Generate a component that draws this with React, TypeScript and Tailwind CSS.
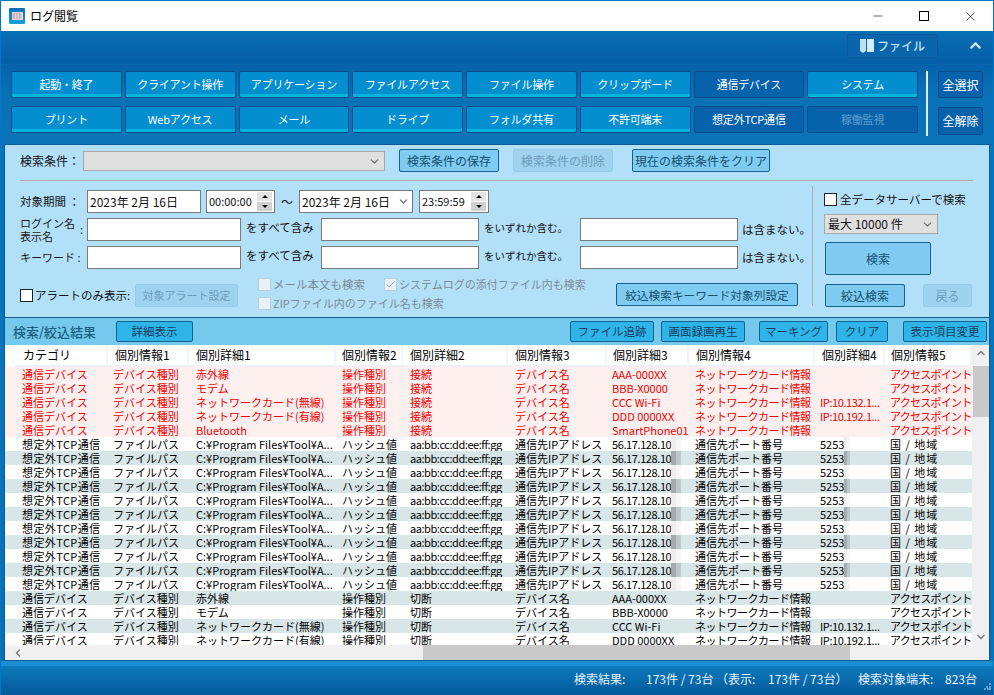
import type { ReactNode } from 'react'
import { Minus, X, ChevronUp, ChevronDown, ChevronLeft, Check } from 'lucide-react'

const row1 = ['起動・終了', 'クライアント操作', 'アプリケーション', 'ファイルアクセス', 'ファイル操作', 'クリップボード', '通信デバイス', 'システム']
const row2 = ['プリント', 'Webアクセス', 'メール', 'ドライブ', 'フォルダ共有', '不許可端末', '想定外TCP通信', '稼働監視']

const columns = [
  { name: 'カテゴリ', w: 'w-[93px]', pad: 'pl-[8px]', text: 'pl-[7px]' },
  { name: '個別情報1', w: 'w-[81px]', pad: 'pl-[7px]', text: 'pl-[5px]' },
  { name: '個別詳細1', w: 'w-[147px]', pad: 'pl-[7px]', text: 'pl-[7px]' },
  { name: '個別情報2', w: 'w-[67px]', pad: 'pl-[6px]', text: 'pl-[6px]' },
  { name: '個別詳細2', w: 'w-[105px]', pad: 'pl-[7px]', text: 'pl-[7px]' },
  { name: '個別情報3', w: 'w-[99px]', pad: 'pl-[7px]', text: 'pl-[7px]' },
  { name: '個別詳細3', w: 'w-[82px]', pad: 'pl-[6px]', text: 'pl-[5px]' },
  { name: '個別情報4', w: 'w-[126px]', pad: 'pl-[7px]', text: 'pl-[6px]' },
  { name: '個別詳細4', w: 'w-[70px]', pad: 'pl-[7px]', text: 'pl-[5px]' },
  { name: '個別情報5', w: 'w-[87px]', pad: 'pl-[6px]', text: 'pl-[5px]' },
]

const devices = [
  ['赤外線', 'AAA-000XX', ''],
  ['モデム', 'BBB-X0000', ''],
  ['ネットワークカード(無線)', 'CCC Wi-Fi', 'IP:10.132.1...'],
  ['ネットワークカード(有線)', 'DDD 0000XX', 'IP:10.192.1...'],
  ['Bluetooth', 'SmartPhone01', ''],
]

function deviceRow(d: string[], op: string) {
  return ['通信デバイス', 'デバイス種別', d[0], '操作種別', op, 'デバイス名', d[1], 'ネットワークカード情報', d[2], 'アクセスポイント']
}

const tcpRow = ['想定外TCP通信', 'ファイルパス', 'C:¥Program Files¥Tool¥A...', 'ハッシュ値', 'aa:bb:cc:dd:ee:ff:gg', '通信先IPアドレス', '56.17.128.10', '通信先ポート番号', '5253', '国 / 地域']

const rows = [
  ...devices.map((d) => ({ cells: deviceRow(d, '接続'), kind: 'alert' })),
  ...Array.from({ length: 11 }, () => ({ cells: tcpRow, kind: 'tcp' })),
  ...devices.slice(0, 4).map((d) => ({ cells: deviceRow(d, '切断'), kind: 'normal' })),
]

function cellTracking(kind: string, j: number) {
  if (kind === 'tcp') {
    if (j === 0) return 'tracking-[0.4px]'
    if (j === 4) return 'tracking-[-0.45px]'
    if (j === 6) return 'tracking-[-0.4px]'
    if (j === 9) return 'tracking-[1px]'
    return ''
  }
  if (j === 7) return 'tracking-[-0.5px]'
  if (j === 8) return 'tracking-[-0.4px]'
  if (j === 9) return 'tracking-[-0.75px]'
  return ''
}

function TopButton({ label, dark, disabled }: { label: string; dark?: boolean; disabled?: boolean }) {
  return (
    <div
      className={`h-[27px] rounded-[2px] border border-[#0b4e90] flex items-center justify-center text-[11px] tracking-[-0.2px] ${
        disabled
          ? 'bg-[#0762ac] text-[#5c9ccb]'
          : dark
            ? 'bg-[#0762ac] text-white'
            : 'bg-[#038fcf] text-white shadow-[inset_0_-3px_0_#02b4de]'
      }`}
    >
      {label}
    </div>
  )
}

function Btn({ label, className = '', disabled }: { label: string; className?: string; disabled?: boolean }) {
  return (
    <div
      className={`shrink-0 h-[23px] rounded-[2px] border flex items-center justify-center ${
        disabled ? 'bg-[#9fd2ec] border-[#97cbe6] text-[#6c9db8]' : 'bg-[#7fcbf2] border-[#12618f] text-[#14506e]'
      } ${className}`}
    >
      {label}
    </div>
  )
}

function HeadBtn({ label, className = '' }: { label: string; className?: string }) {
  return (
    <div className={`shrink-0 h-[21px] rounded-[2px] border border-[#12618f] bg-[#2fb4e9] flex items-center justify-center text-[11.5px] text-[#14405e] ${className}`}>
      {label}
    </div>
  )
}

function Field({ className = '' }: { className?: string }) {
  return <div className={`shrink-0 h-[23px] bg-white border border-[#7a7a7a] ${className}`} />
}

function Spinner() {
  return (
    <div className="flex flex-col gap-[1px] w-[15px] shrink-0">
      <div className="h-[9px] bg-[#e4e4e4] flex items-center justify-center">
        <div className="w-0 h-0 border-x-[3px] border-x-transparent border-b-[3px] border-b-black" />
      </div>
      <div className="h-[9px] bg-[#d0d0d0] flex items-center justify-center">
        <div className="w-0 h-0 border-x-[3px] border-x-transparent border-t-[3px] border-t-black" />
      </div>
    </div>
  )
}

function Box({ checked, disabled }: { checked?: boolean; disabled?: boolean }) {
  return (
    <div className={`shrink-0 w-[13px] h-[13px] flex items-center justify-center border ${disabled ? 'bg-[#e6f2f8] border-[#b9cfdb]' : 'bg-white border-[#222]'}`}>
      {checked && <Check size={11} strokeWidth={2} className="text-[#9a9a9a]" />}
    </div>
  )
}

function KeywordRow({ label }: { label: ReactNode }) {
  return (
    <div className="flex items-center h-[23px]">
      <div className="w-[67px] shrink-0 text-[11px] leading-[13px] text-[#1a1a1a]">{label}</div>
      <Field className="w-[154px]" />
      <span className="w-[80px] shrink-0 pl-[5px] text-[11.5px] pb-[4px] whitespace-nowrap">をすべて含み</span>
      <Field className="w-[158px]" />
      <span className="w-[101px] shrink-0 pl-[5px] text-[10.5px] pb-[4px] whitespace-nowrap">をいずれか含む。</span>
      <Field className="w-[158px]" />
      <span className="pl-[4px] text-[11.5px] whitespace-nowrap">は含まない。</span>
    </div>
  )
}

function Blur({ strong, narrow }: { strong: boolean; narrow?: boolean }) {
  return (
    <span className={`shrink-0 h-[14px] flex ${narrow ? 'w-[6px]' : 'w-[10px]'}`}>
      <span className={`flex-1 ${strong ? 'bg-[#a3adad]' : 'bg-[#eeeeee]'}`} />
      <span className={`flex-1 ${strong ? 'bg-[#bcc8c8]' : 'bg-[#f6f6f6]'}`} />
    </span>
  )
}

export default function App() {
  return (
    <div
      className="w-[994px] h-[695px] overflow-hidden flex flex-col border-x border-t border-[#0078c8] bg-[#0a6cb2] text-[#111]"
      style={{ fontFamily: '"Noto Sans CJK JP", "Liberation Sans", sans-serif' }}
    >
      {/* title bar */}
      <div className="h-[30px] shrink-0 bg-white flex items-center pl-[8px]">
        <div className="w-[16px] h-[16px] rounded-[1px] bg-[linear-gradient(180deg,#0a6fb8,#12a4d8)] flex items-center justify-center">
          <div className="w-[11px] h-[8px] bg-[#e6d3da] grid grid-cols-3 gap-[1px] p-[1px]">
            <div className="bg-[#e8a9a4]" />
            <div className="bg-[#b9c6de]" />
            <div className="bg-[#e8a9a4]" />
          </div>
        </div>
        <span className="ml-[5px] text-[12px] text-black">ログ閲覧</span>
        <div className="ml-auto flex items-center text-black">
          <div className="w-[46px] flex justify-center"><Minus size={14} strokeWidth={1} /></div>
          <div className="w-[46px] flex justify-center"><div className="w-[10px] h-[10px] border border-black" /></div>
          <div className="w-[46px] flex justify-center"><X size={15} strokeWidth={1} /></div>
        </div>
      </div>

      {/* ribbon */}
      <div className="flex-1 min-h-0 flex flex-col bg-[linear-gradient(180deg,#086eb3_0px,#055fa8_30px,#0a70b5_60px,#0b74b8_110px,#0a70b5_630px,#0c7cbd_634px,#04599b_664px)]">
        <div className="h-[34px] shrink-0 flex items-center justify-end border-b border-[#0a66ac] pb-[4px] mb-[6px]">
          <div className="w-[91px] h-[24px] rounded-[2px] border border-[#0d5a9e] bg-[#0a66ac] flex items-center justify-center gap-[3px] text-[#bfe0f4] text-[12px] font-medium mr-[29px]">
            <svg width="14" height="15" viewBox="0 0 14 15">
              <path d="M0 1h6v12l-3 2-3-2z" fill="#bfdff3" />
              <path d="M7 1h7v13H7z" fill="#d8ecf8" />
            </svg>
            ファイル
          </div>
          <ChevronUp size={17} strokeWidth={3} className="text-[#cfe6f5] mr-[9px]" />
        </div>

        <div className="flex h-[67px] shrink-0 pl-[10px] mb-[4px]">
          <div className="w-[907px] shrink-0 grid grid-cols-8 gap-x-[3px] gap-y-[8px] content-start">
            {row1.map((l, i) => <TopButton key={l} label={l} dark={i === 6} />)}
            {row2.map((l, i) => <TopButton key={l} label={l} dark={i === 6} disabled={i === 7} />)}
          </div>
          <div className="w-[2px] h-[65px] bg-[#dcebf5] ml-[8px] shrink-0" />
          <div className="flex flex-col gap-[9px] ml-[10px]">
            <div className="w-[45px] h-[27px] rounded-[2px] border border-[#0b4e90] bg-[#0762ac] text-white text-[12px] flex items-center justify-center">全選択</div>
            <div className="w-[45px] h-[28px] rounded-[2px] border border-[#0b4e90] bg-[#0762ac] text-white text-[12px] flex items-center justify-center">全解除</div>
          </div>
        </div>

        {/* main panel */}
        <div className="mt-[2px] ml-[3px] w-[986px] h-[517px] shrink-0 border border-[#0e5a94] bg-[#b2e0f8] flex flex-col">
          {/* saved conditions */}
          <div className="h-[35px] shrink-0 pl-[15px] pt-[4px] flex items-start text-[12px]">
            <span className="w-[63px] pt-[3px] shrink-0">検索条件：</span>
            <div className="w-[302px] h-[20px] mt-[2px] shrink-0 bg-[#e0e0e0] border border-[#a8a8a8] flex items-center justify-end pr-[3px]">
              <ChevronDown size={13} className="text-[#666]" />
            </div>
            <Btn label="検索条件の保存" className="w-[100px] ml-[14px]" />
            <Btn label="検索条件の削除" disabled className="w-[100px] ml-[14px]" />
            <Btn label="現在の検索条件をクリア" className="w-[138px] ml-[19px]" />
          </div>
          <div className="h-[1px] shrink-0 bg-[#a9abac] ml-[15px] w-[953px]" />

          <div className="flex flex-1 min-h-0">
            {/* search form */}
            <div className="w-[793px] shrink-0 pl-[15px] pt-[9px] flex flex-col">
              <div className="flex items-center h-[23px] text-[12px]">
                <span className="w-[67px] shrink-0 text-[11.5px] whitespace-pre">対象期間 ：</span>
                <div className="w-[114px] h-[23px] shrink-0 bg-white border border-[#7a7a7a] px-[2px] flex items-center">2023年 2月 16日</div>
                <div className="w-[69px] h-[23px] ml-[5px] shrink-0 bg-white border border-[#7a7a7a] px-[2px] text-[11px] flex items-center justify-between">00:00:00<Spinner /></div>
                <span className="w-[24px] shrink-0 text-center">～</span>
                <div className="w-[114px] h-[23px] shrink-0 bg-white border border-[#7a7a7a] px-[2px] flex items-center justify-between">2023年 2月 16日<ChevronDown size={13} className="text-[#666]" /></div>
                <div className="w-[70px] h-[23px] ml-[6px] shrink-0 bg-white border border-[#7a7a7a] px-[2px] text-[11px] flex items-center justify-between">23:59:59<Spinner /></div>
              </div>
              <div className="mt-[5px]">
                <KeywordRow label={<span className="flex items-center justify-between pr-[4px]"><span>ログイン名<br />表示名</span><span>:</span></span>} />
              </div>
              <div className="mt-[5px]">
                <KeywordRow label={<span className="whitespace-nowrap">キーワード :</span>} />
              </div>
              <div className="flex mt-[9px]">
                <div className="w-[238px] shrink-0 flex items-center h-[27px] mt-[4px]">
                  <Box />
                  <span className="ml-[2px] w-[100px] shrink-0 text-[11.5px] whitespace-nowrap">アラートのみ表示:</span>
                  <Btn label="対象アラート設定" disabled className="w-[103px] text-[11px]" />
                </div>
                <div className="w-[358px] shrink-0 flex flex-col gap-[6px] text-[11px] text-[#7b8b96]">
                  <div className="flex items-center h-[13px]">
                    <Box disabled />
                    <span className="ml-[2px] w-[111px] shrink-0 text-[11.5px]">メール本文も検索</span>
                    <Box disabled checked />
                    <span className="ml-[2px] whitespace-nowrap">システムログの添付ファイル内も検索</span>
                  </div>
                  <div className="flex items-center h-[13px]">
                    <Box disabled />
                    <span className="ml-[2px] whitespace-nowrap">ZIPファイル内のファイル名も検索</span>
                  </div>
                </div>
                <Btn label="絞込検索キーワード対象列設定" className="w-[182px] mt-[5px] text-[11.7px]" />
              </div>
            </div>

            <div className="w-[1px] h-[120px] mt-[5px] ml-[14px] bg-[#a9abac] shrink-0" />

            {/* right column */}
            <div className="pl-[11px] pt-[12px] flex flex-col">
              <div className="flex items-center h-[13px]">
                <Box />
                <span className="ml-[3px] text-[11.5px] whitespace-nowrap">全データサーバーで検索</span>
              </div>
              <div className="w-[114px] h-[20px] mt-[8px] bg-[#e0e0e0] border border-[#a8a8a8] text-[12px] flex items-center justify-between px-[3px]">
                最大 10000 件<ChevronDown size={13} className="text-[#666]" />
              </div>
              <Btn label="検索" className="w-[106px] !h-[33px] mt-[8px] ml-[1px] text-[12px]" />
              <div className="flex mt-[9px] ml-[1px] text-[12px]">
                <Btn label="絞込検索" className="w-[80px]" />
                <Btn label="戻る" disabled className="w-[49px] ml-[18px]" />
              </div>
            </div>
          </div>

          {/* results header */}
          <div className="h-[28px] shrink-0 border-t border-[#15568f] bg-[#74c9ec] flex items-center pl-[8px] pr-[2px]">
            <span className="w-[103px] shrink-0 text-[13px] font-medium text-[#1a5f80]">検索/絞込結果</span>
            <HeadBtn label="詳細表示" className="w-[77px]" />
            <HeadBtn label="ファイル追跡" className="w-[84px] ml-auto" />
            <HeadBtn label="画面録画再生" className="w-[84px] ml-[7px]" />
            <HeadBtn label="マーキング" className="w-[69px] ml-[14px]" />
            <HeadBtn label="クリア" className="w-[52px] ml-[8px]" />
            <HeadBtn label="表示項目変更" className="w-[84px] ml-[15px]" />
          </div>

          {/* table */}
          <div className="flex h-[300px] shrink-0 bg-white">
            <div className="w-[967px] shrink-0 overflow-hidden">
              <div className="flex h-[22px] pl-[10px] text-[12px]">
                {columns.map((c) => (
                  <div key={c.name} className={`${c.w} ${c.pad} shrink-0 border-r-2 border-[#eef5fb] border-b-2 border-b-[#eef2f8] flex items-center text-black`}>{c.name}</div>
                ))}
              </div>
              {rows.map((r, i) => {
                const alert = r.kind === 'alert'
                const shaded = !alert && (i - 5) % 2 === 1
                return (
                  <div key={i} className={`flex h-[14px] pl-[10px] text-[11px] leading-[14px] ${alert ? 'bg-[#fff0f0] text-[#f00000]' : shaded ? 'bg-[#d9e6e7] text-black' : 'bg-white text-black'}`}>
                    {r.cells.map((cell, j) => (
                      <div key={j} className={`${columns[j].w} ${columns[j].text} ${cellTracking(r.kind, j)} shrink-0 flex whitespace-nowrap overflow-hidden`}>
                        {cell}
                        {r.kind === 'tcp' && (j === 6 || j === 8) && <Blur strong={shaded} narrow={j === 8} />}
                      </div>
                    ))}
                  </div>
                )
              })}
            </div>
            <div className="w-[17px] shrink-0 bg-[#f0f0f0] flex flex-col items-center">
              <ChevronUp size={12} strokeWidth={3} className="text-[#7a7a7a] mt-[2px] mb-[7px]" />
              <div className="w-[16px] h-[51px] bg-[#c9c9c9]" />
              <ChevronDown size={12} strokeWidth={3} className="text-[#7a7a7a] mt-auto mb-[2px]" />
            </div>
          </div>
          <div className="h-[15px] shrink-0 bg-[#f0f0f0] flex items-center">
            <ChevronLeft size={12} strokeWidth={3} className="text-[#7a7a7a] ml-[7px]" />
            <div className="w-[427px] h-[15px] bg-[#c9c9c9] ml-[399px]" />
          </div>
        </div>

        {/* status */}
        <div className="h-[5px] shrink-0 bg-[#1b8fd2]" />
        <div className="flex-1 flex items-center justify-end text-[12px] text-[#e6f3fb] pr-[2px] pb-[3px] whitespace-nowrap">
          <span className="w-[72px]">検索結果:</span>
          <span className="w-[70px]">173件 / 73台</span>
          <span className="w-[52px]">（表示:</span>
          <span className="w-[90px]">173件 / 73台）</span>
          <span className="w-[87px]">検索対象端末:</span>
          <span className="w-[30px]">823台</span>
          <svg width="7" height="7" viewBox="0 0 7 7" className="ml-[9px] mt-[14px]">
            <path d="M5 0h2v2H5zM2 3h2v2H2zM5 3h2v2H5zM0 5h2v2H0zM3 5h2v2H3zM5 5h2v2H5z" fill="#5aa5d6" />
          </svg>
        </div>
      </div>
    </div>
  )
}
